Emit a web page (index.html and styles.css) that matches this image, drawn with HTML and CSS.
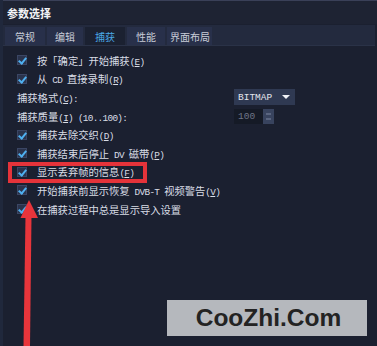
FILE: index.html
```html
<!DOCTYPE html>
<html lang="zh">
<head>
<meta charset="utf-8">
<title>参数选择</title>
<link rel="stylesheet" href="styles.css">
</head>
<body>
<div class="win">
  <div class="titlebar">参数选择</div>
  <div class="tabs">
    <div class="tab">常规</div>
    <div class="tab">编辑</div>
    <div class="tab active">捕获</div>
    <div class="tab">性能</div>
    <div class="tab">界面布局</div>
  </div>
  <div class="panel">
    <div class="row"><span class="cb"></span><span class="txt">按「确定」开始捕获<span class="en">(<u>E</u>)</span></span></div>
    <div class="row"><span class="cb"></span><span class="txt">从<span class="en"> CD </span>直接录制<span class="en">(<u>R</u>)</span></span></div>
    <div class="row field">
      <span class="label">捕获格式<span class="en">(<u>C</u>):</span></span>
      <div class="select"><span>BITMAP</span><span class="caret"></span></div>
    </div>
    <div class="row field">
      <span class="label">捕获质量<span class="en">(<u>I</u>) (10..100):</span></span>
      <div class="spin"><span class="num">100</span><span class="spinbtn"><i></i><i></i></span></div>
    </div>
    <div class="row"><span class="cb"></span><span class="txt">捕获去除交织<span class="en">(<u>D</u>)</span></span></div>
    <div class="row"><span class="cb"></span><span class="txt">捕获结束后停止<span class="en"> DV </span>磁带<span class="en">(<u>P</u>)</span></span></div>
    <div class="row"><span class="cb"></span><span class="txt">显示丢弃帧的信息<span class="en">(<u>F</u>)</span></span></div>
    <div class="row"><span class="cb"></span><span class="txt">开始捕获前显示恢复<span class="en"> DVB-T </span>视频警告<span class="en">(<u>V</u>)</span></span></div>
    <div class="row"><span class="cb"></span><span class="txt">在捕获过程中总是显示导入设置</span></div>
  </div>
  <div class="highlight"></div>
  <svg class="pointer" width="377" height="346" viewBox="0 0 377 346">
    <polygon points="23.5,346 30,346 31.5,216 25.5,216" fill="#e8353b"/>
    <polygon points="29,200 20.5,218 38,218" fill="#e8353b"/>
  </svg>
  <div class="watermark">CooZhi.Com</div>
</div>
</body>
</html>
```

FILE: styles.css
```css
html, body {
  margin: 0;
  padding: 0;
  background: #1b2030;
}
.win {
  position: relative;
  width: 377px;
  height: 346px;
  overflow: hidden;
  background: #1b2030;
  color: #d9dde6;
  font-family: "Noto Sans CJK SC", sans-serif;
  font-size: 10.3px;
  box-sizing: border-box;
  border-left: 3px solid #20283c;
}
.titlebar {
  height: 24px;
  box-sizing: border-box;
  border-top: 1px solid #3a4058;
  background: #1e2333;
  padding-left: 4px;
  display: flex;
  align-items: center;
  font-weight: bold;
  font-size: 11px;
  color: #f2f3f6;
}
.tabs {
  height: 21px;
  margin-top: 1px;
  margin-right: 2px;
  background: #232a3e;
  display: flex;
  align-items: stretch;
  padding: 2px 0 0 2px;
  box-sizing: border-box;
  gap: 2px;
  border-bottom: 1px solid #2a3247;
}
.tab {
  display: flex;
  align-items: center;
  justify-content: center;
  padding: 0 10px;
  background: #28304a;
  font-size: 10px;
  color: #c9cdd8;
}
.tab:nth-child(2) { padding: 0 8px; }
.tab:nth-child(4) { padding: 0 9px; }
.tab:nth-child(5) { padding: 0 2px 0 3px; }
.tab.active {
  background: #1b2131;
  color: #4aa8e6;
}
.panel {
  padding: 5px 0 0 13px;
}
.row {
  height: 18.6px;
  display: flex;
  align-items: center;
}
.cb {
  width: 10px;
  height: 10px;
  box-sizing: border-box;
  background: #2a334c;
  border: 1px solid #3b4664;
  margin-left: 1px;
  margin-right: 10px;
  position: relative;
  flex: none;
}
.cb::after {
  content: "";
  position: absolute;
  left: 2px;
  top: 0px;
  width: 3px;
  height: 6px;
  border-right: 2px solid #4fb0f0;
  border-bottom: 2px solid #4fb0f0;
  transform: rotate(40deg);
}
.txt, .label {
  white-space: pre;
}
.en {
  font-family: "Liberation Mono", monospace;
  font-size: 9.4px;
  letter-spacing: -0.7px;
  white-space: pre;
}
u {
  text-decoration: underline;
  text-underline-offset: 1px;
}
.field .label {
  width: 217px;
  padding-left: 1px;
  flex: none;
}
.select {
  width: 61px;
  height: 16px;
  box-sizing: border-box;
  background: #2f3952;
  display: flex;
  align-items: center;
  justify-content: space-between;
  padding: 0 5px 0 4px;
  font-family: "Liberation Mono", monospace;
  font-size: 9.5px;
  color: #e3e6ee;
}
.caret {
  width: 0;
  height: 0;
  border-left: 4px solid transparent;
  border-right: 4px solid transparent;
  border-top: 4px solid #f0f2f6;
}
.spin {
  display: flex;
  height: 15px;
}
.num {
  width: 29px;
  box-sizing: border-box;
  background: #151a26;
  color: #6f7688;
  font-family: "Liberation Mono", monospace;
  font-size: 9.5px;
  padding-left: 4px;
  display: flex;
  align-items: center;
}
.spinbtn {
  width: 11px;
  background: #38435e;
  display: flex;
  flex-direction: column;
  justify-content: center;
  align-items: center;
  gap: 3px;
}
.spinbtn i {
  display: block;
  width: 5px;
  height: 2px;
  background: #5a6580;
}
.highlight {
  position: absolute;
  left: 5px;
  top: 162px;
  width: 139px;
  height: 21px;
  box-sizing: border-box;
  border: 4px solid #e5333a;
}
.pointer {
  position: absolute;
  left: -3px;
  top: 0;
}
.watermark {
  position: absolute;
  left: 164px;
  top: 300px;
  width: 200px;
  height: 36px;
  background: #b5b8bd;
  color: #232323;
  font-family: "Liberation Sans", Arial, sans-serif;
  font-weight: bold;
  font-size: 24.5px;
  display: flex;
  align-items: center;
  justify-content: center;
  padding-left: 3px;
  box-sizing: border-box;
}
```
